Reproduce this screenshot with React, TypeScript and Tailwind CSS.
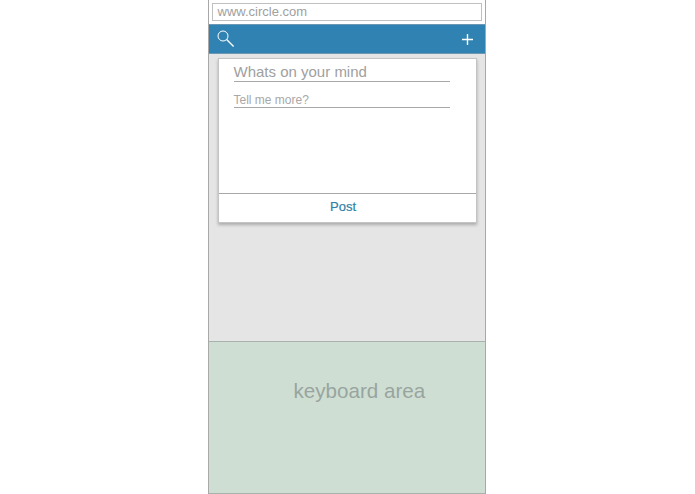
function SearchIcon() {
  return (
    <svg width="18" height="18" viewBox="0 0 18 18" fill="none" stroke="#ffffff" strokeWidth="1">
      <circle cx="6" cy="6" r="5" />
      <path d="M9.6 9.6 L16.6 16.6" strokeWidth="1.4" />
    </svg>
  )
}

function PlusIcon() {
  return (
    <svg width="11" height="11" viewBox="0 0 11 11" fill="none" stroke="#ffffff" strokeWidth="1.4">
      <path d="M5.5 0 V11 M0 5.5 H11" />
    </svg>
  )
}

export default function App() {
  return (
    <div className="flex h-[494px] w-[695px] justify-center bg-white font-['Liberation_Sans',sans-serif]">
      <div className="flex h-[494px] w-[278px] ml-[-2px] flex-col border-x border-[#a8a8a8]">
        <div className="h-[24px] shrink-0 bg-white px-[3px] pt-[3px]">
          <div className="flex h-[18px] w-[270px] items-center border border-[#c0c0c0] pl-[5px] text-[13px] text-[#a0a0a0]">
            www.circle.com
          </div>
        </div>
        <div className="flex h-[30px] shrink-0 items-center justify-between border-y border-[#6d98b3] bg-[#2f82b2] pl-[8px] pr-[12px]">
          <SearchIcon />
          <PlusIcon />
        </div>
        <div className="h-[287px] shrink-0 bg-[#e5e5e5] pl-[9px] pt-[4px]">
          <div className="flex h-[165px] w-[259px] flex-col border border-[#c4c4c4] bg-white shadow-[0_2px_3px_rgba(0,0,0,0.25)]">
            <div className="flex flex-1 flex-col pl-[15px]">
              <div className="mt-[4px] h-[19px] w-[216px] border-b border-[#a8a8a8] text-[15px] leading-[18px] text-[#a0a0a0]">
                Whats on your mind
              </div>
              <div className="mt-[10px] h-[16px] w-[216px] border-b border-[#a8a8a8] text-[12px] leading-[16px] text-[#a8a8a8]">
                Tell me more?
              </div>
            </div>
            <div className="flex h-[29px] items-center justify-center border-t border-[#a8a8a8] pb-[2px] pr-[8px] text-[13px] text-[#2f7fa8] [-webkit-text-stroke:0.2px_#2f7fa8]">
              Post
            </div>
          </div>
        </div>
        <div className="flex-1 border-y border-[#a9b3ad] bg-[#cfded3] pl-[85px] pt-[36px] text-[20.6px] leading-[26px] text-[#98a59f]">
          keyboard area
        </div>
      </div>
    </div>
  )
}
